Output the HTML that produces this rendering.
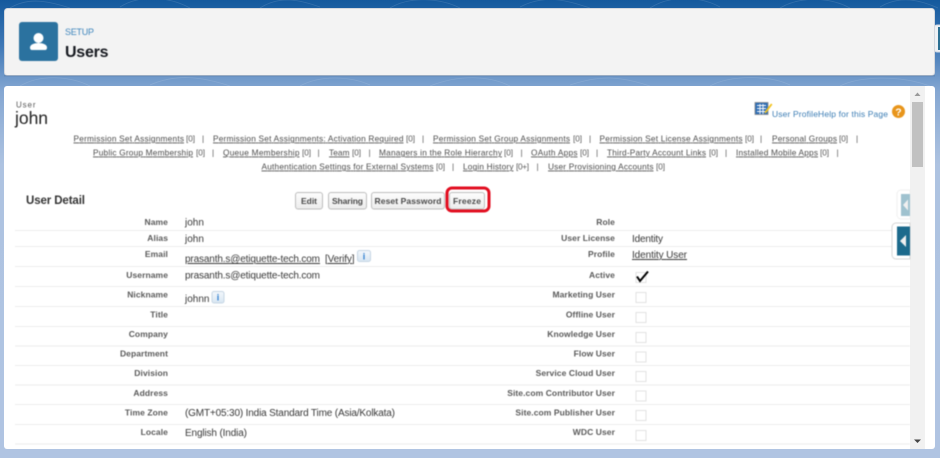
<!DOCTYPE html>
<html><head><meta charset="utf-8"><title>Users</title>
<style>
html,body{margin:0;padding:0;width:940px;height:458px;overflow:hidden;background:#b0c4e2}
svg{display:block;position:absolute;left:0;top:0}
text{font-family:"Liberation Sans",sans-serif}
.l{font-size:8.5px;font-weight:bold;fill:#5a5a5a;text-anchor:end;letter-spacing:.08px}
.v{font-size:10px;fill:#383838}
.a{font-size:8.3px;fill:#4a4a4a;text-decoration:underline}
.p{font-size:8.3px;fill:#5a5a5a}
.b{font-size:8.5px;font-weight:bold;fill:#4a4a4a;text-anchor:middle}
.soft{filter:blur(.4px)}
</style></head><body>
<svg width="940" height="458" viewBox="0 0 940 458" xmlns="http://www.w3.org/2000/svg">
<defs>
<linearGradient id="bg" x1="0" y1="0" x2="0" y2="1"><stop offset="0" stop-color="#14599d"/><stop offset=".1" stop-color="#3f78b6"/><stop offset=".2" stop-color="#85a7d2"/><stop offset=".36" stop-color="#aec3e1"/><stop offset="1" stop-color="#b0c4e2"/></linearGradient>
<linearGradient id="btn" x1="0" y1="0" x2="0" y2="1"><stop offset="0" stop-color="#fdfdfd"/><stop offset="1" stop-color="#ececec"/></linearGradient>
<linearGradient id="info" x1="0" y1="0" x2="0" y2="1"><stop offset="0" stop-color="#f4f8fc"/><stop offset="1" stop-color="#d8e6f2"/></linearGradient>
</defs>
<rect width="940" height="458" fill="url(#bg)"/>
<g fill="none" stroke="#fff" stroke-opacity=".13" stroke-width=".8">
<path d="M10 8C30-4 50 2 70 8M120 7C140-6 170-3 190 8M260 8C280-5 300 0 320 7M390 8C410-4 440-2 460 8M520 7C545-6 565 0 590 8M650 8C670-5 700-4 720 7M780 8C800-4 830-3 850 8M880 7C900-5 920 0 938 8"/>
<path d="M20 86C40 74 70 76 90 86M150 85C175 74 200 76 230 86M300 86C320 75 350 76 370 85M430 86C460 74 490 76 510 86M570 85C600 75 620 76 650 86M710 86C730 75 770 75 790 85M840 86C860 76 900 75 930 86"/>
</g>
<rect x="934" y="25" width="10" height="27" rx="3" fill="#eef1f5" stroke="#cfd8e3"/>
<rect x="938" y="27" width="4" height="23" fill="#2b6f92"/>
<rect x="4.500" y="8.500" width="930" height="67" rx="3" fill="#f3f3f3" stroke="#d4d8de"/>
<rect x="4" y="75" width="931" height="1.500" fill="#54779f" opacity=".45"/>
<rect x="4" y="86" width="931" height="363" rx="3" fill="#fff"/>
<rect x="910" y="86" width="15" height="363" fill="#f1f1f1"/>
<rect x="912" y="102" width="11" height="65" fill="#c1c1c1"/>
<path d="M914.500 96L917.500 92.500L920.500 96Z" fill="#9a9a9a"/>
<path d="M914 439.500H921L917.500 443Z" fill="#444"/>

<g class="soft">
<rect x="19" y="22" width="39" height="39" rx="3" fill="#2b729f"/>
<circle cx="38.500" cy="38" r="5" fill="#fff"/>
<path d="M30 47.500C30 44.500 34.500 43 38.500 43C42.500 43 47 44.500 47 47.500C47 49.500 46 50 45 50H32C31 50 30 49.500 30 47.500Z" fill="#fff"/>
<text x="65" y="35" font-size="9" fill="#3f86bd" textLength="29">SETUP</text>
<text x="65" y="57" font-size="16" font-weight="bold" fill="#16191f" textLength="43.500">Users</text>

<text x="16" y="107.500" font-size="8" fill="#555" textLength="19.500">User</text>
<text x="15" y="124" font-size="17.500" fill="#222" textLength="33">john</text>

<rect x="755" y="102.500" width="13" height="12" fill="#2e6db4" stroke="#888" stroke-width=".8"/>
<path d="M757 105.500H766M757 108.500H766M757 111.500H766M760 104V114M763 104V114" stroke="#fff" stroke-width=".9"/>
<path d="M765 111.500L771 103.500L772.500 104.500L766.500 112.500L764.500 113.500Z" fill="#f3c320"/>
<text x="772" y="117" font-size="8.500" fill="#3c7db4" textLength="116">User ProfileHelp for this Page</text>
<circle cx="898.500" cy="111.500" r="6.500" fill="#e8951b"/>
<text x="898.500" y="115.500" font-size="10.500" font-weight="bold" fill="#fff" text-anchor="middle">?</text>

<text class="a" x="73.500" y="141.500" textLength="110.500">Permission Set Assignments</text><text class="p" x="186" y="141.500" textLength="9">[0]</text><text class="p" x="202" y="141.500">|</text>
<text class="a" x="213" y="141.500" textLength="190.500">Permission Set Assignments: Activation Required</text><text class="p" x="406" y="141.500" textLength="9">[0]</text><text class="p" x="422" y="141.500">|</text>
<text class="a" x="433" y="141.500" textLength="137">Permission Set Group Assignments</text><text class="p" x="573" y="141.500" textLength="9">[0]</text><text class="p" x="589" y="141.500">|</text>
<text class="a" x="599.500" y="141.500" textLength="143">Permission Set License Assignments</text><text class="p" x="745" y="141.500" textLength="9">[0]</text><text class="p" x="760" y="141.500">|</text>
<text class="a" x="772" y="141.500" textLength="65">Personal Groups</text><text class="p" x="839" y="141.500" textLength="9">[0]</text><text class="p" x="856" y="141.500">|</text>

<text class="a" x="93" y="155.500" textLength="100">Public Group Membership</text><text class="p" x="196" y="155.500" textLength="9">[0]</text><text class="p" x="212" y="155.500">|</text>
<text class="a" x="223" y="155.500" textLength="76.500">Queue Membership</text><text class="p" x="302" y="155.500" textLength="9">[0]</text><text class="p" x="317.500" y="155.500">|</text>
<text class="a" x="329" y="155.500" textLength="20.500">Team</text><text class="p" x="352" y="155.500" textLength="9">[0]</text><text class="p" x="368.500" y="155.500">|</text>
<text class="a" x="379" y="155.500" textLength="123">Managers in the Role Hierarchy</text><text class="p" x="504" y="155.500" textLength="9">[0]</text><text class="p" x="520.500" y="155.500">|</text>
<text class="a" x="531" y="155.500" textLength="46.500">OAuth Apps</text><text class="p" x="580" y="155.500" textLength="9">[0]</text><text class="p" x="596" y="155.500">|</text>
<text class="a" x="607" y="155.500" textLength="99">Third-Party Account Links</text><text class="p" x="709" y="155.500" textLength="9">[0]</text><text class="p" x="725" y="155.500">|</text>
<text class="a" x="736" y="155.500" textLength="82">Installed Mobile Apps</text><text class="p" x="820" y="155.500" textLength="9">[0]</text><text class="p" x="836.500" y="155.500">|</text>

<text class="a" x="261.500" y="169.500" textLength="172">Authentication Settings for External Systems</text><text class="p" x="436" y="169.500" textLength="9">[0]</text><text class="p" x="452" y="169.500">|</text>
<text class="a" x="463" y="169.500" textLength="50.500">Login History</text><text class="p" x="516" y="169.500" textLength="13">[0+]</text><text class="p" x="536.500" y="169.500">|</text>
<text class="a" x="548" y="169.500" textLength="105.500">User Provisioning Accounts</text><text class="p" x="656" y="169.500" textLength="9">[0]</text>

<text x="26" y="204" font-size="11.500" font-weight="bold" fill="#333" textLength="59">User Detail</text>
<g fill="url(#btn)" stroke="#bdbdbd">
<rect x="295.500" y="192.500" width="27" height="16.500" rx="2.500"/>
<rect x="328.500" y="192.500" width="38" height="16.500" rx="2.500"/>
<rect x="371.500" y="192.500" width="73" height="16.500" rx="2.500"/>
<rect x="449.500" y="192.500" width="35" height="16.500" rx="2.500"/>
</g>
<text class="b" x="309" y="204" textLength="16">Edit</text>
<text class="b" x="347.500" y="204" textLength="31">Sharing</text>
<text class="b" x="408" y="204" textLength="67">Reset Password</text>
<text class="b" x="467" y="204" textLength="28">Freeze</text>
<rect x="447" y="188" width="42" height="23" rx="5" fill="none" stroke="#e20e20" stroke-width="3"/>

<g stroke="#ececec" stroke-width="1">
<path d="M15 230.500H910M15 246.500H910M15 266.500H910M15 286.500H910M15 306.500H910M15 326.500H910M15 346H910M15 365.500H910M15 385H910M15 404.500H910M15 424.500H910M15 444H910"/>
</g>

<text class="l" x="168" y="225">Name</text>
<text class="l" x="168" y="241">Alias</text>
<text class="l" x="168" y="257">Email</text>
<text class="l" x="168" y="278">Username</text>
<text class="l" x="168" y="297.500">Nickname</text>
<text class="l" x="168" y="317.500">Title</text>
<text class="l" x="168" y="337">Company</text>
<text class="l" x="168" y="356.500">Department</text>
<text class="l" x="168" y="376">Division</text>
<text class="l" x="168" y="396">Address</text>
<text class="l" x="168" y="415.500">Time Zone</text>
<text class="l" x="168" y="435">Locale</text>

<text class="v" x="185" y="225.500">john</text>
<text class="v" x="185" y="242">john</text>
<text class="v" x="185" y="262" textLength="135" text-decoration="underline">prasanth.s@etiquette-tech.com</text>
<text class="v" x="325" y="262" textLength="29.500" text-decoration="underline">[Verify]</text>
<text class="v" x="185" y="278.500" textLength="135">prasanth.s@etiquette-tech.com</text>
<text class="v" x="185" y="302">johnn</text>
<text class="v" x="185" y="416" textLength="210">(GMT+05:30) India Standard Time (Asia/Kolkata)</text>
<text class="v" x="185" y="436" textLength="62">English (India)</text>

<g fill="url(#info)" stroke="#c6d6e4">
<rect x="357.500" y="250.500" width="13" height="11" rx="2"/>
<rect x="212" y="291.500" width="12" height="11.500" rx="2"/>
</g>
<text x="364" y="259.500" font-size="9" font-weight="bold" fill="#2f7fd0" text-anchor="middle">i</text>
<text x="218" y="300.500" font-size="9" font-weight="bold" fill="#2f7fd0" text-anchor="middle">i</text>

<text class="l" x="615" y="225">Role</text>
<text class="l" x="615" y="241">User License</text>
<text class="l" x="615" y="257">Profile</text>
<text class="l" x="615" y="278">Active</text>
<text class="l" x="615" y="297.500">Marketing User</text>
<text class="l" x="615" y="317.500">Offline User</text>
<text class="l" x="615" y="337">Knowledge User</text>
<text class="l" x="615" y="356.500">Flow User</text>
<text class="l" x="615" y="376">Service Cloud User</text>
<text class="l" x="615" y="396">Site.com Contributor User</text>
<text class="l" x="615" y="415.500">Site.com Publisher User</text>
<text class="l" x="615" y="435">WDC User</text>

<text class="v" x="632" y="242" textLength="31">Identity</text>
<text class="v" x="632" y="258" textLength="55" text-decoration="underline">Identity User</text>

<g fill="#fff" stroke="#e2e2e2">
<rect x="636" y="272.500" width="10" height="10"/>
<rect x="636" y="292.500" width="10" height="10"/>
<rect x="636" y="312.500" width="10" height="10"/>
<rect x="636" y="332.500" width="10" height="10"/>
<rect x="636" y="352" width="10" height="10"/>
<rect x="636" y="371.500" width="10" height="10"/>
<rect x="636" y="391" width="10" height="10"/>
<rect x="636" y="410.500" width="10" height="10"/>
<rect x="636" y="430.500" width="10" height="10"/>
</g>
<path d="M637 276.500L640 281L648 271.500" fill="none" stroke="#000" stroke-width="2"/>

<path d="M910 190H901A4 4 0 0 0 897 194V215A4 4 0 0 0 901 219H910Z" fill="#fff" stroke="#f0f0f0"/>
<rect x="901" y="194" width="9" height="22" fill="#9fc2cf"/>
<path d="M908 199.500V210.500L903 205Z" fill="#f0f0f0"/>
<path d="M910 223H896A4 4 0 0 0 892 227V255A4 4 0 0 0 896 259H910Z" fill="#fff" stroke="#d6d6d6"/>
<rect x="897" y="226.500" width="13" height="29" fill="#1c6a8c"/>
<path d="M906 235V247L900 241Z" fill="#f0f0f0"/>
</g>
</svg>
</body></html>
